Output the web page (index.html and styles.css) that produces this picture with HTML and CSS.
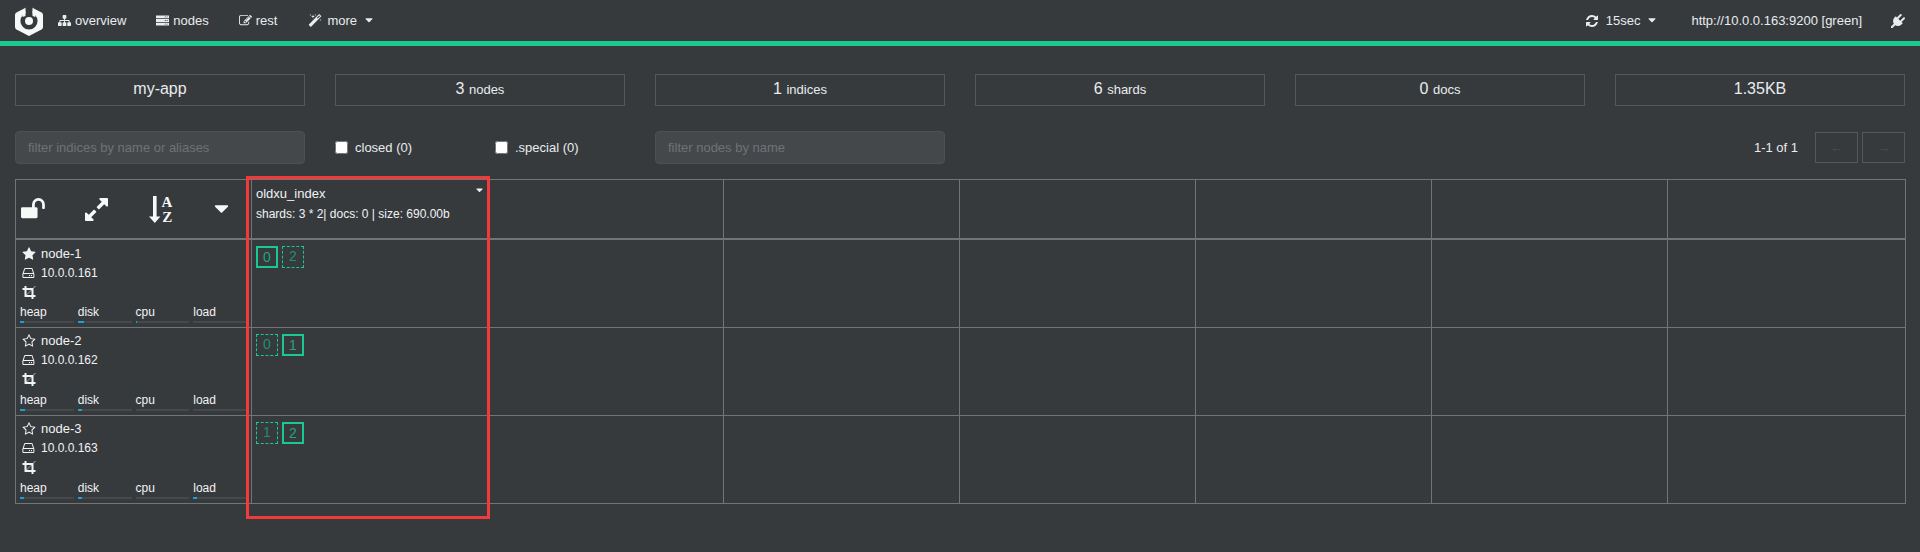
FILE: index.html
```html
<!DOCTYPE html>
<html lang="en">
<head>
<meta charset="utf-8">
<title>cerebro</title>
<link rel="stylesheet" href="styles.css">
</head>
<body>
<svg class="sprite" xmlns="http://www.w3.org/2000/svg">
  <symbol id="i-sitemap" viewBox="0 0 1792 1792"><path d="M1792 1248v320q0 40-28 68t-68 28h-320q-40 0-68-28t-28-68v-320q0-40 28-68t68-28h96v-192h-512v192h96q40 0 68 28t28 68v320q0 40-28 68t-68 28h-320q-40 0-68-28t-28-68v-320q0-40 28-68t68-28h96v-192h-512v192h96q40 0 68 28t28 68v320q0 40-28 68t-68 28h-320q-40 0-68-28t-28-68v-320q0-40 28-68t68-28h96v-192q0-52 38-90t90-38h512v-192h-96q-40 0-68-28t-28-68v-320q0-40 28-68t68-28h320q40 0 68 28t28 68v320q0 40-28 68t-68 28h-96v192h512q52 0 90 38t38 90v192h96q40 0 68 28t28 68z"/></symbol>
  <symbol id="i-server" viewBox="0 0 14 14"><path fill-rule="evenodd" d="M0 1.5h14v3.2H0zM9.5 2.6v1h1v-1zM11.5 2.6v1h1v-1zM0 5.4h14v3.2H0zM9.5 6.5v1h1v-1zM11.5 6.5v1h1v-1zM0 9.3h14v3.2H0zM9.5 10.4v1h1v-1zM11.5 10.4v1h1v-1z"/></symbol>
  <symbol id="i-edit" viewBox="0 0 1792 1792"><path d="M888 1184l116-116-152-152-116 116v56h96v96h56zm440-720q-16-16-33 1l-350 350q-17 17-1 33t33-1l350-350q17-17 1-33zm80 594v190q0 119-84.5 203.5t-203.5 84.5h-832q-119 0-203.5-84.5t-84.5-203.5v-832q0-119 84.5-203.5t203.5-84.5h832q63 0 117 25 15 7 18 23 3 17-9 29l-49 49q-14 14-32 8-23-6-45-6h-832q-66 0-113 47t-47 113v832q0 66 47 113t113 47h832q66 0 113-47t47-113v-126q0-13 9-22l64-64q15-15 35-7t20 29zm-96-738l288 288-672 672h-288v-288zm444 132l-92 92-288-288 92-92q28-28 68-28t68 28l152 152q28 28 28 68t-28 68z"/></symbol>
  <symbol id="i-magic" viewBox="0 0 1792 1792"><path d="M1254 581l293-293-107-107-293 293zm447-293q0 27-18 45l-1286 1286q-18 18-45 18t-45-18l-198-198q-18-18-18-45t18-45l1286-1286q18-18 45-18t45 18l198 198q18 18 18 45zm-1351-190l98 30-98 30-30 98-30-98-98-30 98-30 30-98zm350 162l196 60-196 60-60 196-60-196-196-60 196-60 60-196zm930 478l98 30-98 30-30 98-30-98-98-30 98-30 30-98zm-640-640l98 30-98 30-30 98-30-98-98-30 98-30 30-98z"/></symbol>
  <symbol id="i-caret" viewBox="320 640 1152 640"><path d="M1408 704q0 26-19 45l-448 448q-19 19-45 19t-45-19l-448-448q-19-19-19-45t19-45 45-19h896q26 0 45 19t19 45z"/></symbol>
  <symbol id="i-refresh" viewBox="0 0 1792 1792"><path d="M1639 1056q0 5-1 7-64 268-268 434.5t-478 166.5q-146 0-282.5-55t-243.5-157l-129 129q-19 19-45 19t-45-19-19-45v-448q0-26 19-45t45-19h448q26 0 45 19t19 45-19 45l-137 137q71 66 161 102t187 36q134 0 250-65t186-179q11-17 53-117 8-23 30-23h192q13 0 22.5 9.5t9.5 22.5zm25-800v448q0 26-19 45t-45 19h-448q-26 0-45-19t-19-45 19-45l138-138q-148-137-349-137-134 0-250 65t-186 179q-11 17-53 117-8 23-30 23h-199q-13 0-22.5-9.5t-9.5-22.5v-7q65-268 270-434.5t480-166.5q146 0 284 55.5t245 156.5l130-129q19-19 45-19t45 19 19 45z"/></symbol>
  <symbol id="i-plug" viewBox="0 0 1792 1792"><path d="M1755 453q37 38 37 90.5t-37 90.5l-401 400 150 150-160 160q-163 163-389.5 186.5t-411.5-100.5l-362 362h-181v-181l362-362q-124-185-100.5-411.5t186.5-389.5l160-160 150 150 400-401q38-37 91-37t90 37 37 90.5-37 90.5l-400 401 234 234 401-400q38-37 91-37t90 37z"/></symbol>
  <symbol id="i-unlock" viewBox="0 128 1728 1536"><path d="M1728 576v256q0 26-19 45t-45 19h-64q-26 0-45-19t-19-45v-256q0-106-75-181t-181-75-181 75-75 181v192h96q40 0 68 28t28 68v576q0 40-28 68t-68 28h-960q-40 0-68-28t-28-68v-576q0-40 28-68t68-28h672v-192q0-185 131.5-316.5t316.5-131.5 316.5 131.5 131.5 316.5z"/></symbol>
  <symbol id="i-expand" viewBox="128 128 1536 1536"><path d="M883 1056q0 13-10 23l-332 332 144 144q19 19 19 45t-19 45-45 19h-448q-26 0-45-19t-19-45v-448q0-26 19-45t45-19 45 19l144 144 332-332q10-10 23-10t23 10l114 114q10 10 10 23zm781-864v448q0 26-19 45t-45 19-45-19l-144-144-332 332q-10 10-23 10t-23-10l-114-114q-10-10-10-23t10-23l332-332-144-144q-19-19-19-45t19-45 45-19h448q26 0 45 19t19 45z"/></symbol>
  <symbol id="i-star" viewBox="0 0 1792 1792"><path d="M1728 647q0 22-26 48l-363 354 86 500q1 7 1 20 0 21-10.5 35.5t-30.5 14.5q-19 0-40-12l-449-236-449 236q-22 12-40 12-21 0-31.5-14.5t-10.5-35.5q0-6 2-20l86-500-364-354q-25-27-25-48 0-37 56-46l502-73 225-455q19-41 49-41t49 41l225 455 502 73q56 9 56 46z"/></symbol>
  <symbol id="i-star-o" viewBox="0 0 1792 1792"><path d="M1201 1004l306-297-422-62-189-382-189 382-422 62 306 297-73 421 378-199 377 199zm527-357q0 22-26 48l-363 354 86 500q1 7 1 20 0 50-41 50-19 0-40-12l-449-236-449 236q-22 12-40 12-21 0-31.5-14.5t-10.5-35.5q0-6 2-20l86-500-364-354q-25-27-25-48 0-37 56-46l502-73 225-455q19-41 49-41t49 41l225 455 502 73q56 9 56 46z"/></symbol>
  <symbol id="i-hdd" viewBox="0 0 1792 1792"><path d="M1040 1216q0 33-23.5 56.5t-56.5 23.5-56.5-23.5-23.5-56.5 23.5-56.5 56.5-23.5 56.5 23.5 23.5 56.5zm256 0q0 33-23.5 56.5t-56.5 23.5-56.5-23.5-23.5-56.5 23.5-56.5 56.5-23.5 56.5 23.5 23.5 56.5zm160 160v-320q0-13-9.5-22.5t-22.5-9.5h-1216q-13 0-22.5 9.5t-9.5 22.5v320q0 13 9.5 22.5t22.5 9.5h1216q13 0 22.5-9.5t9.5-22.5zm-1230-480h1180l-157-482q-4-13-16-21.5t-26-8.5h-782q-14 0-26 8.5t-16 21.5zm1358 160v320q0 66-47 113t-113 47h-1216q-66 0-113-47t-47-113v-320q0-25 16-75l197-606q17-53 63-86t101-33h782q55 0 101 33t63 86l197 606q16 50 16 75z"/></symbol>
  <symbol id="i-crop" viewBox="0 0 1792 1792"><path d="M621 1280h595v-595zm-45-45l595-595h-595v595zm1152 77v192q0 14-9 23t-23 9h-224v224q0 14-9 23t-23 9h-192q-14 0-23-9t-9-23v-224h-864q-14 0-23-9t-9-23v-864h-224q-14 0-23-9t-9-23v-192q0-14 9-23t23-9h224v-224q0-14 9-23t23-9h192q14 0 23 9t9 23v224h851l246-247q10-9 23-9t23 9q9 10 9 23t-9 23l-247 246v851h224q14 0 23 9t9 23z"/></symbol>
</svg>

<nav class="nav">
  <svg class="logo" viewBox="0 0 28 30"><path class="logo-hex" d="M14 0l12.5 6.6q1.5.8 1.5 2.4v12q0 1.6-1.5 2.4L14 30 1.5 23.4Q0 22.6 0 21V9q0-1.6 1.5-2.4z"/><circle class="logo-ring" cx="14" cy="15" r="8.6"/><rect class="logo-ring" x="10.5" y="0" width="7" height="10"/><path class="logo-hex" d="M7.6 6.2l2.9-1.5v5.2l-2.9 1zM20.4 6.2l-2.9-1.5v5.2l2.9 1z"/><circle class="logo-hex" cx="14" cy="15" r="4"/></svg>
  <a class="nav-item nav-first"><svg class="ico nav-ico"><use href="#i-sitemap"/></svg>overview</a>
  <a class="nav-item nav-nodes"><svg class="ico nav-ico"><use href="#i-server"/></svg>nodes</a>
  <a class="nav-item nav-rest"><svg class="ico nav-ico"><use href="#i-edit"/></svg>rest</a>
  <a class="nav-item nav-more"><svg class="ico nav-ico wand"><use href="#i-magic"/></svg>more<svg class="ico caret"><use href="#i-caret"/></svg></a>
  <a class="nav-item nav-refresh"><svg class="ico nav-ico refresh"><use href="#i-refresh"/></svg>15sec<svg class="ico caret"><use href="#i-caret"/></svg></a>
  <a class="nav-item nav-host">http://10.0.0.163:9200 [green]</a>
  <a class="nav-item nav-plug"><svg class="ico plug"><use href="#i-plug"/></svg></a>
</nav>

<main class="page">
  <section class="stats">
    <div class="stat">my-app</div>
    <div class="stat">3 <small>nodes</small></div>
    <div class="stat">1 <small>indices</small></div>
    <div class="stat">6 <small>shards</small></div>
    <div class="stat">0 <small>docs</small></div>
    <div class="stat">1.35KB</div>
  </section>

  <section class="filters">
    <input class="filter" type="text" placeholder="filter indices by name or aliases">
    <div class="checks">
      <label class="check"><input type="checkbox">closed (0)</label>
      <label class="check"><input type="checkbox">.special (0)</label>
    </div>
    <input class="filter" type="text" placeholder="filter nodes by name">
    <div class="pager">
      <span class="pager-text">1-1 of 1</span>
      <button class="pager-btn" type="button">←</button>
      <button class="pager-btn" type="button">→</button>
    </div>
  </section>

  <table class="grid">
    <tr class="head-row">
      <th class="cell-node">
        <div class="tools">
          <svg class="ico t-lock"><use href="#i-unlock"/></svg>
          <svg class="ico t-expand"><use href="#i-expand"/></svg>
          <svg class="ico t-sort" viewBox="0 0 25 27"><path d="M4 0h3.6v20.5H11.4L5.8 27 0 20.5H4z"/><text class="sort-letter" x="12.6" y="11">A</text><text class="sort-letter" x="13.2" y="26">Z</text></svg>
          <svg class="ico t-caret"><use href="#i-caret"/></svg>
        </div>
      </th>
      <th class="cell-index">
        <div class="index-name"><span>oldxu_index</span><svg class="ico index-caret"><use href="#i-caret"/></svg></div>
        <div class="index-info">shards: 3 * 2| docs: 0 | size: 690.00b</div>
      </th>
      <th></th><th></th><th></th><th></th><th></th><th></th>
    </tr>
    <tr>
      <td class="cell-node">
        <div class="node-line name"><svg class="ico star"><use href="#i-star"/></svg>node-1</div>
        <div class="node-line"><svg class="ico star"><use href="#i-hdd"/></svg>10.0.0.161</div>
        <div class="node-line"><svg class="ico star"><use href="#i-crop"/></svg></div>
        <div class="metrics">
          <div class="metric">heap<div class="bar"><i class="fill w4"></i></div></div>
          <div class="metric">disk<div class="bar"><i class="fill w6"></i></div></div>
          <div class="metric">cpu<div class="bar"><i class="fill w1"></i></div></div>
          <div class="metric">load<div class="bar"></div></div>
        </div>
      </td>
      <td class="cell-shards"><div class="shards"><span class="shard">0</span><span class="shard replica">2</span></div></td>
      <td></td><td></td><td></td><td></td><td></td><td></td>
    </tr>
    <tr>
      <td class="cell-node">
        <div class="node-line name"><svg class="ico star"><use href="#i-star-o"/></svg>node-2</div>
        <div class="node-line"><svg class="ico star"><use href="#i-hdd"/></svg>10.0.0.162</div>
        <div class="node-line"><svg class="ico star"><use href="#i-crop"/></svg></div>
        <div class="metrics">
          <div class="metric">heap<div class="bar"><i class="fill w5"></i></div></div>
          <div class="metric">disk<div class="bar"><i class="fill w4"></i></div></div>
          <div class="metric">cpu<div class="bar"></div></div>
          <div class="metric">load<div class="bar"></div></div>
        </div>
      </td>
      <td class="cell-shards"><div class="shards"><span class="shard replica">0</span><span class="shard">1</span></div></td>
      <td></td><td></td><td></td><td></td><td></td><td></td>
    </tr>
    <tr>
      <td class="cell-node">
        <div class="node-line name"><svg class="ico star"><use href="#i-star-o"/></svg>node-3</div>
        <div class="node-line"><svg class="ico star"><use href="#i-hdd"/></svg>10.0.0.163</div>
        <div class="node-line"><svg class="ico star"><use href="#i-crop"/></svg></div>
        <div class="metrics">
          <div class="metric">heap<div class="bar"><i class="fill w4"></i></div></div>
          <div class="metric">disk<div class="bar"><i class="fill w4"></i></div></div>
          <div class="metric">cpu<div class="bar"></div></div>
          <div class="metric">load<div class="bar"><i class="fill w4"></i></div></div>
        </div>
      </td>
      <td class="cell-shards"><div class="shards"><span class="shard replica">1</span><span class="shard">2</span></div></td>
      <td></td><td></td><td></td><td></td><td></td><td></td>
    </tr>
  </table>
</main>
<div class="highlight"></div>
</body>
</html>
```
FILE: styles.css
```css
* { box-sizing: border-box; }
html, body { margin: 0; height: 552px; overflow: hidden; }
body {
  position: relative;
  background: #373a3d;
  color: #f0f3f5;
  font: 13px/18px "Liberation Sans", Arial, sans-serif;
}
.sprite { position: absolute; width: 0; height: 0; }
.ico { display: block; flex: none; fill: currentColor; width: 13px; height: 13px; }

/* nav */
.nav {
  display: flex;
  align-items: center;
  height: 46px;
  padding: 0 15px;
  border-bottom: 5px solid #1bc98e;
}
.logo { width: 28px; height: 30px; flex: none; }
.logo-hex { fill: #f7f8f8; }
.logo-ring { fill: #373a3d; }
.nav-item { display: flex; align-items: center; color: #e8ecef; }
.nav-ico { margin-right: 4px; }
.nav-first { margin-left: 15px; }
.nav-nodes { margin-left: 30px; }
.nav-rest { margin-left: 30px; }
.nav-more { margin-left: 31px; }
.wand { width: 14px; height: 14px; margin-right: 5px; }
.caret { width: 8px; height: 5px; margin-left: 8px; }
.nav-refresh { margin-left: auto; }
.refresh { width: 14px; height: 14px; margin-right: 7px; }
.nav-host { margin-left: 35px; }
.nav-plug { margin-left: 29px; }
.plug { width: 14px; height: 14px; }

/* page */
.page { padding: 28px 15px 0; }
.stats, .filters {
  display: grid;
  grid-template-columns: repeat(6, 290px);
  column-gap: 30px;
}
.stat {
  height: 32px;
  border: 1px solid #55585b;
  font-size: 16px;
  line-height: 28px;
  text-align: center;
  color: #e8ecef;
}
.stat small { font-size: 13px; }
.filters { margin-top: 25px; align-items: center; }
.filter {
  height: 33px;
  width: 100%;
  padding: 0 12px;
  background: #45484b;
  border: 1px solid #4d5053;
  border-radius: 4px;
  color: #e8ecef;
  font: 13px "Liberation Sans", Arial, sans-serif;
}
.filter::placeholder { color: #6f7275; opacity: 1; }
.checks { display: flex; }
.check { display: flex; align-items: center; flex: 0 0 160px; color: #e8ecef; }
.check input { width: 13px; height: 13px; margin: 0 7px 0 0; }
.pager {
  grid-column: 4 / 7;
  display: flex;
  justify-content: flex-end;
  align-items: center;
  height: 33px;
}
.pager-text { margin-right: 17px; color: #e8ecef; }
.pager-btn {
  width: 43px;
  height: 31px;
  margin-left: 4px;
  padding: 0;
  background: transparent;
  border: 1px solid #55585b;
  color: #4d5053;
  font: 13px "Liberation Sans", Arial, sans-serif;
}
.pager-text + .pager-btn { margin-left: 0; }

/* table */
.grid {
  width: 1890px;
  margin-top: 15px;
  table-layout: fixed;
  border-collapse: collapse;
  font-weight: normal;
}
.grid th, .grid td {
  padding: 0;
  border: 1px solid #727476;
  vertical-align: top;
  text-align: left;
  font-weight: normal;
}
.head-row th { width: 236px; height: 59px; border-bottom-width: 2px; }
.head-row th:last-child { width: 238px; }
.grid td { height: 88px; }
.tools {
  display: flex;
  justify-content: space-between;
  align-items: center;
  height: 58px;
  padding: 0 22px 0 4px;
  color: #f7f8f8;
}
.t-lock { width: 25px; height: 22px; }
.t-expand { width: 23px; height: 23px; }
.t-sort { width: 25px; height: 27px; overflow: visible; }
.t-caret { width: 15px; height: 9px; }
.sort-letter { font: bold 15px/1 "Liberation Serif", serif; }
.grid .cell-index { padding: 5px 4px 0 4px; }
.index-name {
  display: flex;
  justify-content: space-between;
  align-items: flex-start;
  line-height: 18px;
}
.index-caret { width: 7px; height: 5px; margin-top: 3px; margin-right: 0; }
.index-info { margin-top: 2px; font-size: 12px; line-height: 18px; }
.grid td.cell-node { padding: 0 4px; }
.node-line {
  display: flex;
  align-items: center;
  height: 19px;
  font-size: 12px;
}
.node-line.name { margin-top: 4px; font-size: 13px; }
.star { width: 14px; height: 14px; margin: 0 5px 0 2px; }
.metrics {
  display: grid;
  grid-template-columns: repeat(4, 1fr);
  column-gap: 4px;
  margin-top: 3px;
  font-size: 12px;
  line-height: 16px;
}
.bar { height: 2px; margin-top: 1px; background: #46494c; }
.fill { display: block; height: 100%; background: #1f9fd6; }
.w1 { width: 1px; }
.w4 { width: 4px; }
.w5 { width: 5px; }
.w6 { width: 6px; }
.shards { display: flex; gap: 4px; padding: 6px 0 0 4px; }
.shard {
  width: 22px;
  height: 22px;
  border: 2px solid #1bc98e;
  color: #20a578;
  font-size: 14px;
  line-height: 18px;
  text-align: center;
}
.shard.replica { border: 1px dashed #1bc98e; color: #1f8f6a; line-height: 18px; }

/* annotation drawn over the table */
.highlight {
  position: absolute;
  left: 246px;
  top: 176px;
  width: 244px;
  height: 343px;
  border: 3px solid #f23a3a;
  pointer-events: none;
}
```
